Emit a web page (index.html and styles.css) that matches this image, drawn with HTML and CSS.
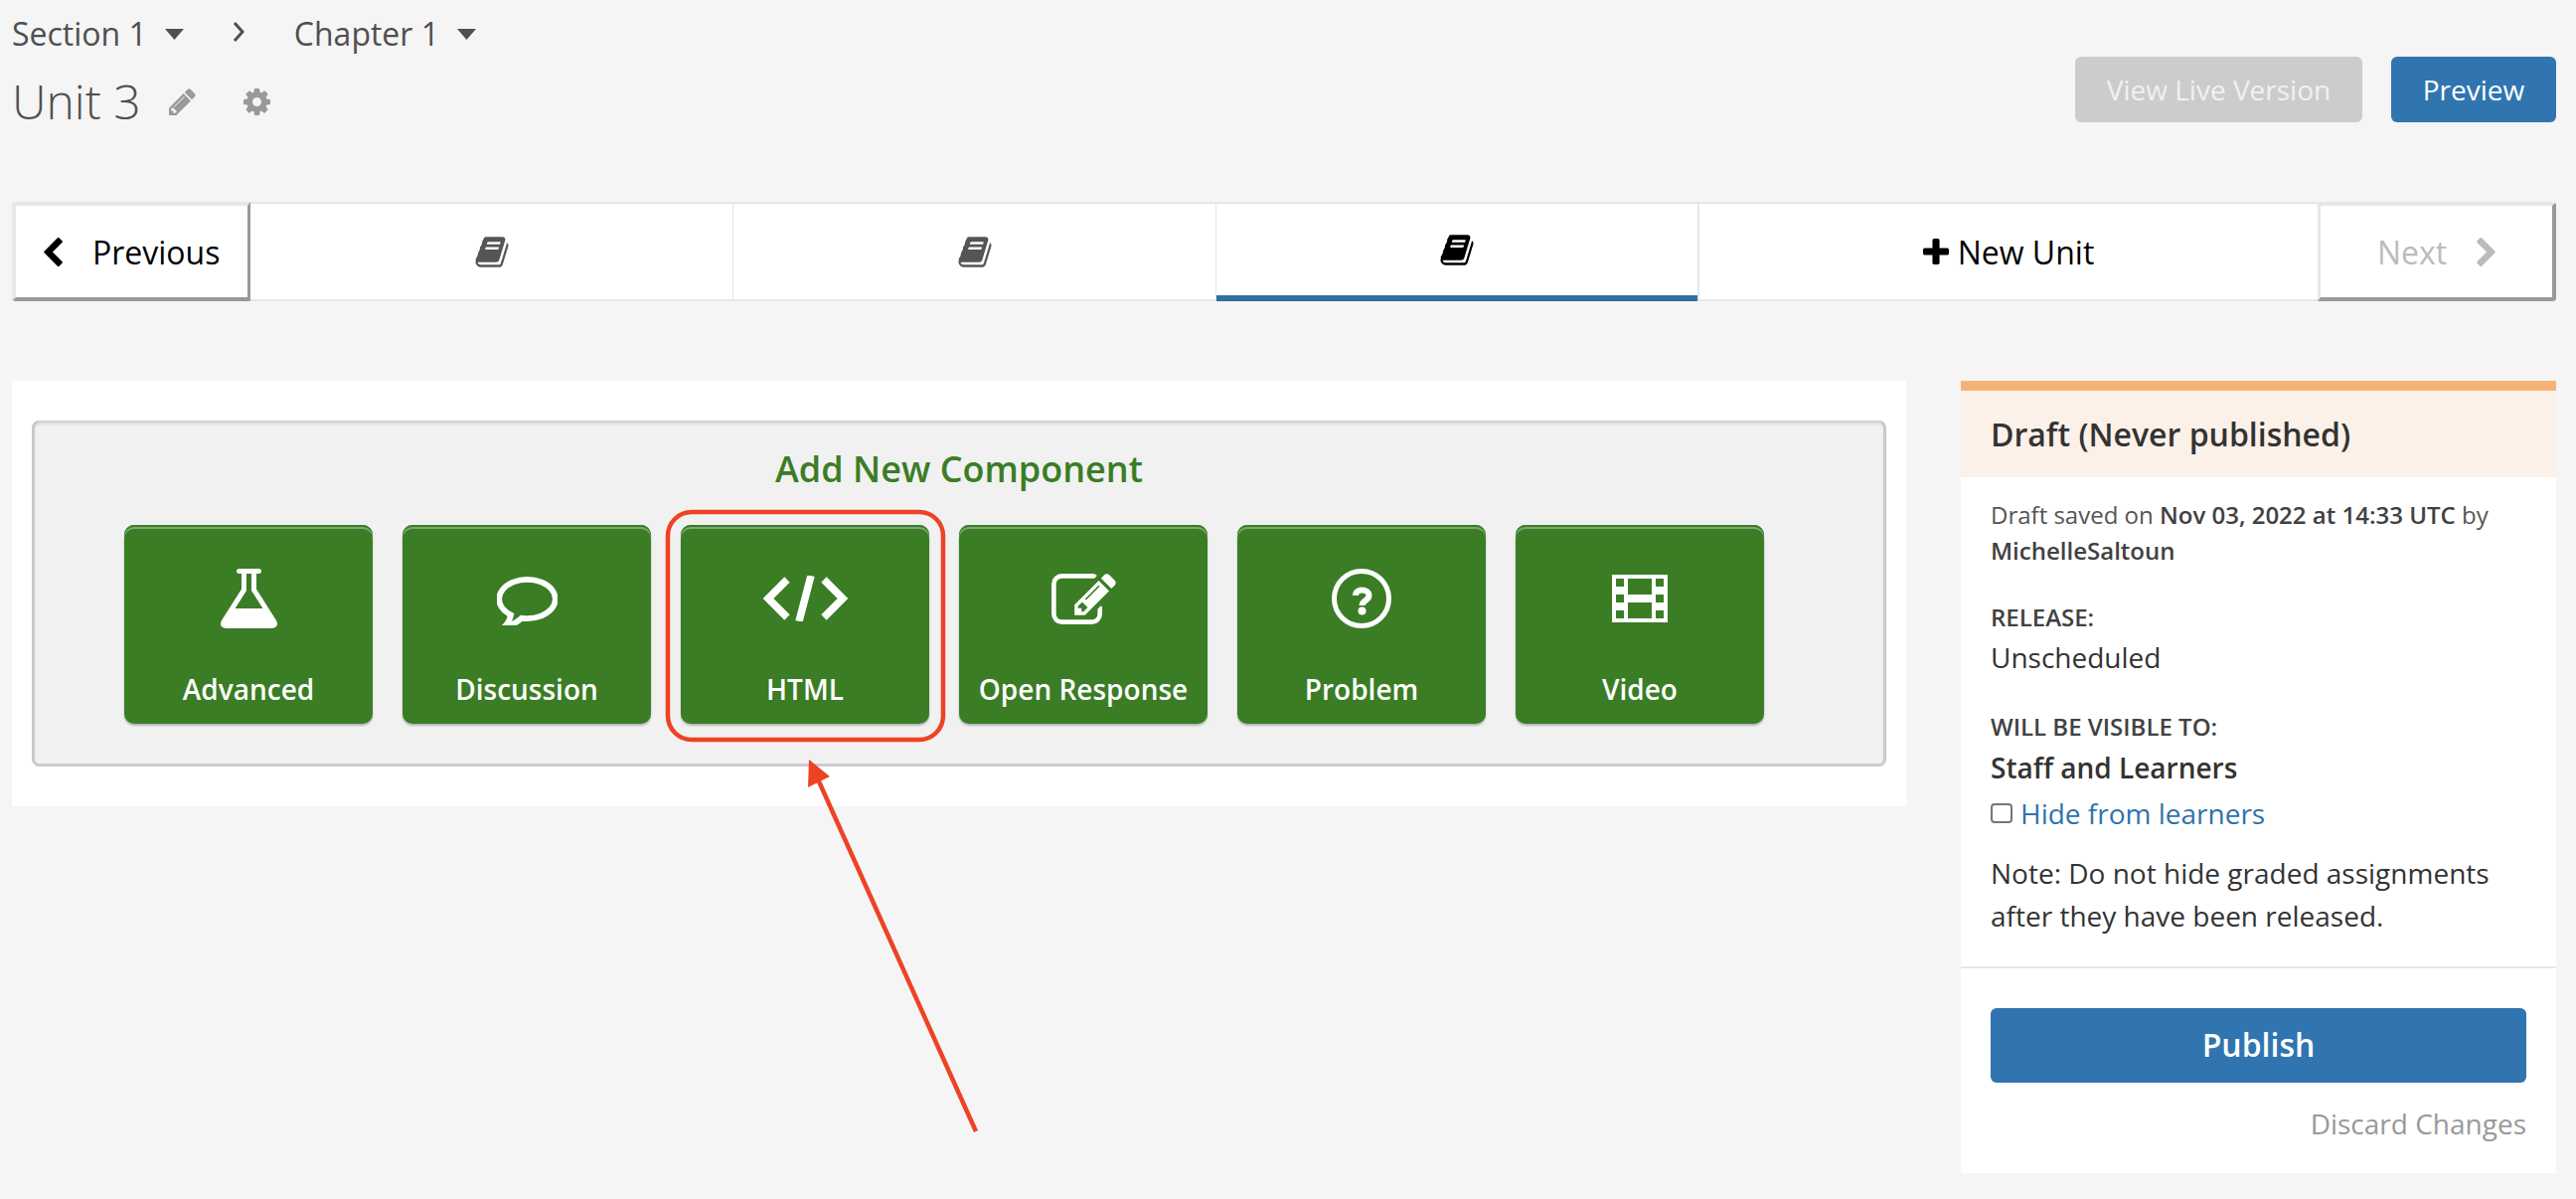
FILE: index.html
```html
<!DOCTYPE html>
<html lang="en">
<head>
  <meta charset="UTF-8">
  <title>Unit 3</title>
  <meta name="viewport" content="width=device-width, initial-scale=1.0">
  <link rel="stylesheet" href="styles.css">
</head>
<body>

  <div class="page">

    <header class="head">
      <div class="head-left">
        <nav class="crumbs">
          <span class="crumb">Section 1</span>
          <svg class="caret" viewBox="0 0 19 11"><path d="M0 0h19L9.5 11z"/></svg>
          <svg class="crumb-sep" viewBox="0 0 12 20"><path d="M2 1l8 9-8 9" fill="none" stroke="#4f4f4f" stroke-width="3"/></svg>
          <span class="crumb">Chapter 1</span>
          <svg class="caret" viewBox="0 0 19 11"><path d="M0 0h19L9.5 11z"/></svg>
        </nav>
        <div class="title-row">
          <h1 class="unit-title">Unit 3</h1>
          <svg class="title-icon" viewBox="128 128 1536 1536"><path d="M491 1536l91-91-235-235-91 91v107h128v128h107zm523-928q0-22-22-22-10 0-17 7l-542 542q-7 7-7 17 0 22 22 22 10 0 17-7l542-542q7-7 7-17zm-54-192l416 416-832 832h-416v-416zm683 96q0 53-37 90l-166 166-416-416 166-165q36-38 90-38 53 0 91 38l235 234q37 39 37 91z"/></svg>
          <svg class="title-icon title-gear" viewBox="128 128 1536 1536"><path d="M1152 896q0-106-75-181t-181-75-181 75-75 181 75 181 181 75 181-75 75-181zm512-109v222q0 12-8 23t-20 13l-185 28q-19 54-39 91 35 50 107 138 10 12 10 25t-9 23q-27 37-99 108t-94 71q-12 0-26-9l-138-108q-44 23-91 38-16 136-29 186-7 28-36 28h-222q-14 0-24.5-8.5t-11.5-21.5l-28-184q-49-16-90-37l-141 107q-10 9-25 9-14 0-25-11-126-114-165-168-7-10-7-23 0-12 8-23 15-21 51-66.5t54-70.5q-27-50-41-99l-183-27q-13-2-21-12.5t-8-23.5v-222q0-12 8-23t19-13l186-28q14-46 39-92-40-57-107-138-10-12-10-24 0-10 9-23 26-36 98.5-107.5t94.5-71.5q13 0 26 10l138 107q44-23 91-38 16-136 29-186 7-28 36-28h222q14 0 24.5 8.5t11.5 21.5l28 184q49 16 90 37l142-107q9-9 24-9 13 0 25 10 129 119 165 170 7 8 7 22 0 12-8 23-15 21-51 66.5t-54 70.5q26 50 41 98l183 28q13 2 21 12.5t8 23.5z"/></svg>
        </div>
      </div>
      <div class="head-actions">
        <a class="btn btn-disabled">View Live Version</a>
        <a class="btn btn-blue">Preview</a>
      </div>
    </header>

    <nav class="unit-nav">
      <a class="nav-end nav-prev">
        <svg class="chev" viewBox="410 26 1036 1612"><path d="M1427 301l-531 531 531 531q19 19 19 45t-19 45l-166 166q-19 19-45 19t-45-19l-742-742q-19-19-19-45t19-45l742-742q19-19 45-19t45 19l166 166q19 19 19 45t-19 45z"/></svg>
        Previous
      </a>
      <a class="tab"><svg class="book" viewBox="40 128 1712 1536"><use href="#book-path"/></svg></a>
      <a class="tab"><svg class="book" viewBox="40 128 1712 1536"><use href="#book-path"/></svg></a>
      <a class="tab tab-active"><svg class="book" viewBox="40 128 1712 1536"><use href="#book-path"/></svg></a>
      <a class="tab tab-new">
        <svg class="plus" viewBox="192 128 1408 1408"><path d="M1600 736v192q0 40-28 68t-68 28h-416v416q0 40-28 68t-68 28h-192q-40 0-68-28t-28-68v-416h-416q-40 0-68-28t-28-68v-192q0-40 28-68t68-28h416v-416q0-40 28-68t68-28h192q40 0 68 28t28 68v416h416q40 0 68 28t28 68z"/></svg>
        New Unit
      </a>
      <a class="nav-end nav-next">
        Next
        <svg class="chev" viewBox="346 26 1036 1612"><path d="M1363 877l-742 742q-19 19-45 19t-45-19l-166-166q-19-19-19-45t19-45l531-531-531-531q-19-19-19-45t19-45l166-166q19-19 45-19t45 19l742 742q19 19 19 45t-19 45z"/></svg>
      </a>
    </nav>

    <main class="content">
      <section class="panel">
        <div class="add-box">
          <h2 class="add-title">Add New Component</h2>
          <div class="comp-row">
            <a class="comp-btn">
              <span class="comp-icon"><svg class="ic-flask" viewBox="180 128 1432 1536"><path d="M1591 1448q56 89 21.5 152.5t-140.5 63.5h-1152q-106 0-140.5-63.5t21.5-152.5l503-793v-399h-64q-26 0-45-19t-19-45 19-45 45-19h512q26 0 45 19t19 45-19 45-45 19h-64v399zm-779-725l-272 429h712l-272-429-20-31v-436h-128v436z"/></svg></span>
              Advanced
            </a>
            <a class="comp-btn">
              <span class="comp-icon"><svg class="ic-comment" viewBox="0 128 1792 1536"><path stroke="#fff" stroke-width="40" d="M896 384q-204 0-381.5 69.5t-282 187.5-104.5 255q0 112 71.5 213.5t201.5 175.5l87 50-27 96q-24 91-70 172 152-63 275-171l43-38 57 6q69 8 130 8 204 0 381.5-69.5t282-187.5 104.5-255-104.5-255-282-187.5-381.5-69.5zm896 512q0 174-120 321.5t-326 233-450 85.5q-70 0-145-8-198 175-460 242-49 14-114 22h-5q-15 0-27-10.5t-16-27.5v-1q-3-4-.5-12t2-10 4.5-9.5l6-9 7-8.5 8-9q7-8 31-34.5t34.5-38 31-39.5 32.5-51 27-59 26-76q-157-89-247.5-220t-90.5-281q0-174 120-321.5t326-233 450-85.5 450 85.5 326 233 120 321.5z"/></svg></span>
              Discussion
            </a>
            <a class="comp-btn">
              <span class="comp-icon"><svg class="ic-code" viewBox="0 0 87 46"><path d="M25 4L6 23l19 19M62 4l19 19-19 19" fill="none" stroke="#fff" stroke-width="7.5"/><path d="M49 0L37 46" fill="none" stroke="#fff" stroke-width="7.5"/></svg></span>
              HTML
            </a>
            <a class="comp-btn">
              <span class="comp-icon"><svg class="ic-edit" viewBox="0 128 1792 1408"><path d="M888 1184l116-116-152-152-116 116v56h96v96h56zm440-720q-16-16-33 1l-350 350q-17 17-1 33t33-1l350-350q17-17 1-33zm80 594v190q0 119-84.5 203.5t-203.5 84.5h-832q-119 0-203.5-84.5t-84.5-203.5v-832q0-119 84.5-203.5t203.5-84.5h832q63 0 117 25 15 7 18 23 3 17-9 29l-49 49q-14 14-32 8-23-6-45-6h-832q-66 0-113 47t-47 113v832q0 66 47 113t113 47h832q66 0 113-47t47-113v-126q0-13 9-22l64-64q15-15 35-7t20 29zm-96-738l288 288-672 672h-288v-288zm444 132l-92 92-288-288 92-92q28-28 68-28t68 28l152 152q28 28 28 68t-28 68z"/></svg></span>
              Open Response
            </a>
            <a class="comp-btn">
              <span class="comp-icon"><svg class="ic-help" viewBox="0 0 60 60"><circle cx="30" cy="30" r="27.5" fill="none" stroke="#fff" stroke-width="5"/><path d="M24 27c0-3.500 3-5.500 6.500-5.500s7 2 7 5.500c0 5-7 5-7 10" fill="none" stroke="#fff" stroke-width="6"/><circle cx="30.500" cy="42.500" r="4" fill="#fff"/></svg></span>
              Problem
            </a>
            <a class="comp-btn">
              <span class="comp-icon"><svg class="ic-film" viewBox="0 0 56 48"><path fill-rule="evenodd" d="M0 0h56v48H0zM4 4v8h8V4zm0 16v8h8v-8zm0 16v8h8v-8zM16 4v16h24V4zm0 24v16h24V28zM44 4v8h8V4zm0 16v8h8v-8zm0 16v8h8v-8z"/></svg></span>
              Video
            </a>
          </div>
        </div>
      </section>

      <aside class="status">
        <h3 class="status-title">Draft (Never published)</h3>
        <div class="status-body">
          <p class="saved">Draft saved on <b>Nov 03, 2022 at 14:33 UTC</b> by <b>MichelleSaltoun</b></p>
          <p class="label label-release">Release:</p>
          <p class="value">Unscheduled</p>
          <p class="label label-visible">Will Be Visible To:</p>
          <p class="value value-strong">Staff and Learners</p>
          <label class="hide-row"><input type="checkbox"> Hide from learners</label>
          <p class="note">Note: Do not hide graded assignments after they have been released.</p>
        </div>
        <div class="status-actions">
          <a class="publish">Publish</a>
          <a class="discard">Discard Changes</a>
        </div>
      </aside>
    </main>

    <!-- red marks drawn over the screenshot -->
    <svg class="marks" viewBox="0 0 2592 1206">
      <rect x="672" y="515" width="277" height="229" rx="24" fill="none" stroke="#ee4225" stroke-width="4.500"/>
      <path d="M982 1138L824 786" fill="none" stroke="#ee4225" stroke-width="4.500"/>
      <path d="M814 764l-1 28 22-11z" fill="#ee4225"/>
    </svg>

  </div>

  <svg class="defs" width="0" height="0">
    <defs>
      <path id="book-path" d="M1703 478q40 57 18 129l-275 906q-19 64-76.500 107.500t-122.500 43.500h-923q-77 0-148.500-53.500t-99.500-131.500q-24-67-2-127 0-4 3-27t4-37q1-8-3-21.500t-3-19.500q2-11 8-21t16.500-23.500 16.500-23.500q23-38 45-91.500t30-91.500q3-10 .5-30t-.5-28q3-11 17-28t17-23q21-36 42-92t25-90q1-9-2.500-32t.5-28q4-13 22-30.500t22-22.500q19-26 42.500-84.500t27.500-96.500q1-8-3-25.500t-2-26.500q2-8 9-18t18-23 17-21q8-12 16.500-30.500t15-35 16-36 19.500-32 26.500-23.500 36-11.500 47.500 5.500l-1 3q38-9 51-9h761q74 0 114 56t18 130l-274 906q-36 119-71.500 153.500t-128.500 34.500h-869q-27 0-38 15-11 16-1 43 24 70 144 70h923q29 0 56-15.500t35-41.500l300-987q7-22 5-57 38 15 59 43zm-1064 2q-4 13 2 22.500t20 9.500h608q13 0 25.500-9.500t16.500-22.500l21-64q4-13-2-22.500t-20-9.500h-608q-13 0-25.500 9.500t-16.500 22.500zm-83 256q-4 13 2 22.500t20 9.500h608q13 0 25.500-9.500t16.500-22.500l21-64q4-13-2-22.500t-20-9.500h-608q-13 0-25.500 9.500t-16.500 22.500z"/>
    </defs>
  </svg>

</body>
</html>
```

FILE: styles.css
```css
* {
  box-sizing: border-box;
}
html, body {
  height: 100%;
}
body {
  margin: 0;
  background: #f5f5f5;
  color: #333;
  font-family: "Open Sans", sans-serif;
  overflow: hidden;
}
p, h1, h2, h3 {
  margin: 0;
}
svg {
  display: block;
  flex: none;
}
.defs {
  position: absolute;
}
.page {
  position: relative;
  height: 1206px;
  padding: 0 20px 0 12px;
}

/* top header */
.head {
  display: flex;
  justify-content: space-between;
  height: 203px;
}
.crumbs {
  display: flex;
  align-items: center;
  height: 66px;
  font-size: 32px;
  color: #4f4f4f;
}
.caret {
  width: 19px;
  height: 11px;
  margin: 3px 0 0 18px;
  fill: #4f4f4f;
}
.crumb-sep {
  width: 12px;
  height: 20px;
  margin: -2px 50px 0 49px;
}
.title-row {
  display: flex;
  align-items: center;
  height: 72px;
}
.unit-title {
  font-size: 48px;
  font-weight: 300;
  line-height: 72px;
  color: #4f4f4f;
}
.title-icon {
  width: 27px;
  height: 27px;
  margin-left: 28px;
  fill: #999;
}
.title-gear {
  margin-left: 48px;
}
.head-actions {
  display: flex;
  gap: 29px;
  padding-top: 57px;
}
.btn {
  display: flex;
  align-items: center;
  justify-content: center;
  height: 66px;
  border-radius: 6px;
  font-size: 28px;
  color: #fff;
}
.btn-disabled {
  width: 289px;
  background: #ccc;
  color: #f1f1f1;
}
.btn-blue {
  width: 166px;
  background: #3075af;
}

/* unit navigation */
.unit-nav {
  display: flex;
  height: 100px;
  font-size: 32px;
}
.nav-end {
  display: flex;
  align-items: center;
  width: 240px;
  background: #fff;
  border-style: solid;
  border-color: #e7e7e7;
  border-width: 4px 0 4px 4px;
  border-bottom-color: #999;
  border-radius: 4px 0 0 4px;
}
.nav-prev {
  gap: 30px;
  padding-left: 28px;
  color: #000;
  border-right: 3px solid #999;
}
.nav-next {
  width: 240px;
  gap: 30px;
  padding-left: 57px;
  color: #bbb;
  border-width: 4px 4px 4px 3px;
  border-right-color: #999;
  border-radius: 0 4px 4px 0;
}
.nav-next .chev {
  fill: #bbb;
}
.chev {
  width: 19px;
  height: 29px;
  fill: #000;
}
.tab {
  display: flex;
  align-items: center;
  justify-content: center;
  width: 486px;
  background: #fff;
  border-top: 2px solid #e7e7e7;
  border-bottom: 2px solid #e7e7e7;
  border-right: 1px solid #e7e7e7;
}
.tab-active {
  width: 484px;
  border-right: 0;
  border-bottom: 6px solid #2f6f9f;
}
.tab-active .book {
  fill: #000;
}
.tab-new {
  width: 624px;
  gap: 9px;
  color: #000;
  border-left: 2px solid #e7e7e7;
  border-right: 0;
}
.book {
  width: 34px;
  height: 31px;
  fill: #555;
}
.plus {
  width: 26px;
  height: 26px;
}

/* main area */
.content {
  display: flex;
  justify-content: space-between;
  margin-top: 80px;
  align-items: flex-start;
}
.panel {
  width: 1906px;
  padding: 40px 20px;
  background: #fff;
}
.add-box {
  height: 348px;
  background: #f1f1f1;
  border-radius: 8px;
  box-shadow: inset 0 2px 4px #c4c4c4, inset 3px 0 0 #ccc, inset -3px 0 0 #ccc, inset 0 -3px 0 #ccc;
}
.add-title {
  height: 105px;
  padding-top: 26px;
  font-size: 36px;
  font-weight: 600;
  line-height: 46px;
  text-align: center;
  color: #3a7d25;
}
.comp-row {
  display: flex;
  gap: 30px;
  padding-left: 93px;
}
.comp-btn {
  width: 250px;
  height: 200px;
  padding-top: 44px;
  border-radius: 10px;
  background: #3a7d25;
  box-shadow: inset 0 2px 0 #3a7d25, inset 0 4px 0 #7ea872, 0 2px 2px rgba(0, 0, 0, 0.25);
  font-size: 28px;
  font-weight: 600;
  text-align: center;
  line-height: 38px;
  color: #fff;
}
.comp-icon {
  display: flex;
  align-items: center;
  justify-content: center;
  height: 60px;
  margin-bottom: 42px;
  fill: #fff;
}
.ic-flask {
  width: 57px;
  height: 60px;
}
.ic-comment {
  width: 61px;
  height: 53px;
}
.ic-code {
  width: 87px;
  height: 46px;
}
.ic-edit {
  width: 65px;
  height: 51px;
}
.ic-help {
  width: 60px;
  height: 60px;
}
.ic-film {
  width: 56px;
  height: 48px;
}

/* status sidebar */
.status {
  width: 599px;
  background: #fff;
}
.status-title {
  height: 97px;
  padding: 0 30px;
  border-top: 10px solid #f5b37a;
  background: #fcf1e8;
  font-size: 32px;
  font-weight: 600;
  line-height: 87px;
  color: #333;
}
.status-body {
  padding: 20px 30px 0;
  height: 492px;
}
.saved {
  font-size: 24px;
  line-height: 36px;
  color: #555;
}
.saved b {
  font-weight: 600;
  color: #414141;
}
.label {
  font-size: 24px;
  font-weight: 600;
  line-height: 34px;
  text-transform: uppercase;
  color: #414141;
}
.label-release {
  margin-top: 32px;
}
.label-visible {
  margin-top: 32px;
}
.value {
  margin-top: 2px;
  font-size: 28px;
  line-height: 42px;
  color: #333;
}
.value-strong {
  font-weight: 600;
  margin-top: 3px;
}
.hide-row {
  display: flex;
  align-items: center;
  gap: 8px;
  margin-top: 4px;
  font-size: 28px;
  line-height: 42px;
  color: #2f73ad;
}
.hide-row input {
  appearance: none;
  width: 22px;
  height: 20px;
  margin: 0;
  background: #fff;
  border: 2px solid #767676;
  border-radius: 4px;
}
.note {
  margin-top: 18px;
  font-size: 28px;
  line-height: 43px;
}
.status-actions {
  height: 208px;
  padding: 40px 30px 0 30px;
  border-top: 2px solid #e7e7e7;
}
.publish {
  display: flex;
  align-items: center;
  justify-content: center;
  height: 75px;
  padding-bottom: 2px;
  border-radius: 6px;
  background: #3075af;
  font-size: 32px;
  font-weight: 600;
  color: #fff;
}
.discard {
  display: block;
  margin-top: 20px;
  font-size: 28px;
  line-height: 42px;
  text-align: right;
  color: #999;
}

/* annotation overlay */
.marks {
  position: absolute;
  top: 0;
  left: 0;
  width: 2592px;
  height: 1206px;
  pointer-events: none;
}
```
